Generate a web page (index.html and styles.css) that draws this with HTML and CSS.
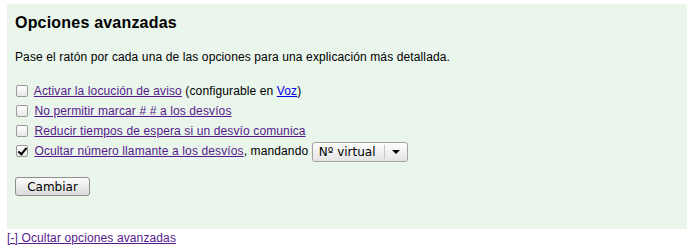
FILE: index.html
```html
<!DOCTYPE html>
<html lang="es">
<head>
  <meta charset="UTF-8" />
  <title>Opciones avanzadas</title>
  <link rel="stylesheet" href="styles.css">
</head>
<body>
  <!-- Panel de opciones -->
  <div class="advanced-box">
    <h2>Opciones avanzadas</h2>
    <p class="intro">Pase el ratón por cada una de las opciones para una explicación más detallada.</p>

    <form class="options">
      <div class="option-row">
        <input type="checkbox" id="opt1" />
        <a href="#" class="visited">Activar la locución de aviso</a> (configurable en <a href="#" class="fresh">Voz</a>)
      </div>
      <div class="option-row">
        <input type="checkbox" id="opt2" />
        <a href="#" class="visited">No permitir marcar # # a los desvíos</a>
      </div>
      <div class="option-row">
        <input type="checkbox" id="opt3" />
        <a href="#" class="visited">Reducir tiempos de espera si un desvío comunica</a>
      </div>
      <div class="option-row">
        <input type="checkbox" id="opt4" checked />
        <a href="#" class="visited">Ocultar número llamante a los desvíos</a>, mandando
        <span class="select-box">
          <span class="select-value">Nº virtual</span>
          <span class="select-arrow"></span>
        </span>
      </div>

      <button type="button" class="submit-button">Cambiar</button>
    </form>
  </div>

  <a href="#" class="toggle-link">[-] Ocultar opciones avanzadas</a>
</body>
</html>
```

FILE: styles.css
```css
body {
  margin: 4px 11px 0 7px;
  font-family: 'Liberation Sans', Arial, sans-serif;
  font-size: 12px;
  letter-spacing: 0.12px;
  color: #000;
  background: #fff;
}

a.visited {
  color: #551a8b;
}

a.fresh {
  color: #0000ee;
}

.advanced-box {
  background-color: #eaf5ec;
  height: 225px;
  padding: 0 8px;
  box-sizing: border-box;
  overflow: hidden;
}

h2 {
  margin: 0;
  padding-top: 9px;
  font-size: 16px;
  font-weight: bold;
  line-height: 20px;
  letter-spacing: 0.2px;
}

.intro {
  margin: 17px 0 17px;
  line-height: 14px;
}

.option-row {
  height: 20px;
  line-height: 20px;
  white-space: nowrap;
}

.option-row input[type="checkbox"] {
  appearance: none;
  -webkit-appearance: none;
  position: relative;
  display: inline-block;
  vertical-align: -2px;
  margin: 0 3px 0 1px;
  width: 12px;
  height: 12px;
  box-sizing: border-box;
  border: 1px solid #9a9a9a;
  border-radius: 2px;
  background: linear-gradient(#ffffff, #e8e8e8);
}

.option-row input[type="checkbox"]:checked::after {
  content: "";
  position: absolute;
  left: 3px;
  top: 0px;
  width: 3px;
  height: 7px;
  border-right: 2px solid #000;
  border-bottom: 2px solid #000;
  transform: rotate(40deg);
}

.select-box {
  display: inline-flex;
  align-items: center;
  vertical-align: middle;
  width: 96px;
  height: 20px;
  box-sizing: border-box;
  border: 1px solid #a3a3a3;
  border-radius: 3px;
  background: linear-gradient(#fdfdfd, #e4e4e4);
  font-family: 'DejaVu Sans', sans-serif;
  font-size: 12px;
  letter-spacing: 0;
  line-height: 18px;
}

.select-value {
  flex: 1;
  padding-left: 6px;
}

.select-arrow {
  width: 22px;
  height: 14px;
  border-left: 1px solid #c8c8c8;
  position: relative;
}

.select-arrow::after {
  content: "";
  position: absolute;
  left: 7px;
  top: 5px;
  border-left: 4px solid transparent;
  border-right: 4px solid transparent;
  border-top: 4px solid #000;
}

.submit-button {
  margin-top: 16px;
  width: 75px;
  height: 19px;
  padding: 0;
  border: 1px solid #8e8e8e;
  border-radius: 3px;
  background: linear-gradient(#fbfbfb, #dcdcdc);
  font-family: 'DejaVu Sans', sans-serif;
  font-size: 12px;
  color: #000;
}

.toggle-link {
  display: block;
  color: #551a8b;
  margin-top: 2px;
  line-height: 14px;
}
```
